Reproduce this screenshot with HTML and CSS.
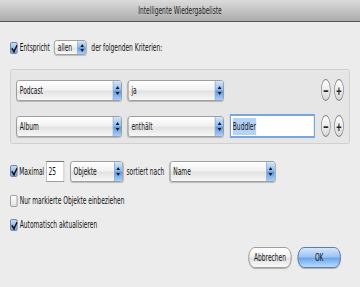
FILE: index.html
```html
<!DOCTYPE html>
<html lang="de">
<head>
  <meta charset="UTF-8" />
  <title>Intelligente Wiedergabeliste</title>
  <meta name="viewport" content="width=device-width, initial-scale=1" />
  <link rel="stylesheet" href="styles.css">
</head>
<body>

  <div class="screen">
    <div class="dialog">
      <div class="titlebar">Intelligente Wiedergabeliste</div>

      <div class="content">
        <div class="line match-line">
          <span class="check checked"></span>
          <span class="label">Entspricht</span>
          <div class="popup small allen"><span class="popup-text">allen</span><span class="arrows"><i class="up"></i><i class="down"></i></span></div>
          <span class="label gap-left">der folgenden Kriterien:</span>
        </div>

        <div class="criteria">
          <div class="rule">
            <div class="popup field-a"><span class="popup-text">Podcast</span><span class="arrows"><i class="up"></i><i class="down"></i></span></div>
            <div class="popup field-b"><span class="popup-text">ja</span><span class="arrows"><i class="up"></i><i class="down"></i></span></div>
            <div class="rule-buttons">
              <span class="round-btn">&minus;</span>
              <span class="round-btn">+</span>
            </div>
          </div>
          <div class="rule">
            <div class="popup field-a"><span class="popup-text">Album</span><span class="arrows"><i class="up"></i><i class="down"></i></span></div>
            <div class="popup field-b"><span class="popup-text">enthält</span><span class="arrows"><i class="up"></i><i class="down"></i></span></div>
            <div class="textfield focused"><span class="selected">Buddler</span></div>
            <div class="rule-buttons">
              <span class="round-btn">&minus;</span>
              <span class="round-btn">+</span>
            </div>
          </div>
        </div>

        <div class="line limit-line">
          <span class="check checked"></span>
          <span class="label">Maximal</span>
          <div class="textfield count">25</div>
          <div class="popup unit"><span class="popup-text">Objekte</span><span class="arrows"><i class="up"></i><i class="down"></i></span></div>
          <span class="label">sortiert nach</span>
          <div class="popup sort"><span class="popup-text">Name</span><span class="arrows"><i class="up"></i><i class="down"></i></span></div>
        </div>

        <div class="line option-line first">
          <span class="check"></span>
          <span class="label">Nur markierte Objekte einbeziehen</span>
        </div>

        <div class="line option-line">
          <span class="check checked"></span>
          <span class="label">Automatisch aktualisieren</span>
        </div>

        <div class="buttons">
          <button class="btn">Abbrechen</button>
          <button class="btn default">OK</button>
        </div>
      </div>
    </div>
  </div>

</body>
</html>
```

FILE: styles.css
```css
* {
  box-sizing: border-box;
}
html, body {
  margin: 0;
  padding: 0;
  background: #ececec;
}
body {
  font-family: 'DejaVu Sans', 'Liberation Sans', sans-serif;
  font-stretch: condensed;
  font-size: 11px;
  color: #111;
}

/* the window is drawn at 600px and squeezed to fit, like the screenshot */
.screen {
  width: 360px;
  height: 287px;
  overflow: hidden;
}
.dialog {
  width: 600px;
  height: 287px;
  background: #ececec;
  transform: scaleX(0.6);
  transform-origin: 0 0;
}
.titlebar {
  height: 22px;
  line-height: 21px;
  text-align: center;
  color: #222;
  font-size: 11px;
  background: linear-gradient(to bottom, #dcdcdc, #ababab);
  border-bottom: 1px solid #555;
}
.content {
  padding: 18px 17px 0 17px;
}
.line {
  display: flex;
  align-items: center;
  gap: 4px;
}
.match-line {
  height: 15px;
}
.match-line .allen {
  margin-left: 3px;
}
.gap-left {
  margin-left: 4px;
}

/* checkboxes */
.check {
  width: 12px;
  height: 12px;
  border: 1px solid #8c8c8c;
  border-radius: 2px;
  background: linear-gradient(to bottom, #ffffff, #e2e2e2);
  position: relative;
  flex: none;
}
.check.checked {
  background: linear-gradient(to bottom, #c5dcf5, #6fa3e0);
  border-color: #4f6f9c;
}
.check.checked::after {
  content: "";
  position: absolute;
  left: 3px;
  top: 0px;
  width: 4px;
  height: 7px;
  border: solid #111;
  border-width: 0 2px 2px 0;
  transform: rotate(40deg);
}

/* popup menus */
.popup {
  display: flex;
  align-items: stretch;
  height: 21px;
  border: 1px solid #8b8b8b;
  border-radius: 4px;
  background: linear-gradient(to bottom, #ffffff 0%, #f1f1f1 45%, #e3e3e3 55%, #f7f7f7 100%);
  box-shadow: 0 1px 1px rgba(0,0,0,0.2);
  overflow: hidden;
  flex: none;
}
.popup-text {
  flex: 1;
  padding-left: 5px;
  line-height: 19px;
}
.arrows {
  width: 14px;
  display: flex;
  flex-direction: column;
  align-items: center;
  justify-content: center;
  gap: 3px;
  background: linear-gradient(to bottom, #d4e6fb 0%, #8fbcf0 45%, #5f9ae2 55%, #a9d0fa 100%);
  border-left: 1px solid #6f8fbf;
}
.arrows i {
  width: 0;
  height: 0;
  border-left: 3px solid transparent;
  border-right: 3px solid transparent;
}
.arrows .up {
  border-bottom: 3px solid #111;
}
.arrows .down {
  border-top: 3px solid #111;
}
.popup.small {
  height: 15px;
}
.popup.small .popup-text {
  line-height: 13px;
}
.popup.small .arrows {
  gap: 2px;
}
.allen {
  width: 54px;
}
.field-a {
  width: 176px;
}
.field-b {
  width: 160px;
}
.unit {
  width: 88px;
  margin-left: 7px;
  margin-right: 3px;
}
.sort {
  width: 176px;
  margin-left: 6px;
}

/* criteria box */
.criteria {
  margin-top: 14px;
  width: 566px;
  height: 75px;
  border: 1px solid #c9c9c9;
  border-radius: 3px;
  background: #e6e6e6;
  padding: 9px 9px 0 9px;
  display: flex;
  flex-direction: column;
  gap: 14px;
}
.rule {
  display: flex;
  align-items: center;
  gap: 10px;
  height: 22px;
}
.rule-buttons {
  margin-left: auto;
  display: flex;
  gap: 6px;
}
.round-btn {
  width: 16px;
  height: 22px;
  border: 1px solid #7d7d7d;
  border-radius: 50%;
  background: linear-gradient(to bottom, #ffffff, #d8d8d8);
  display: flex;
  align-items: center;
  justify-content: center;
  font-family: 'Liberation Sans', sans-serif;
  font-size: 15px;
  font-weight: bold;
  line-height: 1;
  color: #222;
}

/* text fields */
.textfield {
  height: 24px;
  width: 142px;
  background: #fff;
  border: 1px solid #8c8c8c;
  padding: 0 3px;
  display: flex;
  align-items: center;
  flex: none;
}
.textfield.focused {
  border: 2px solid #7ba6da;
  box-shadow: 0 0 1px #a9c7ec;
}
.selected {
  background: #b5d3f7;
  padding: 2px 0;
}
.textfield.count {
  width: 30px;
  height: 21px;
  border-color: #a0a0a0;
  border-top-color: #777;
}

.limit-line {
  margin-top: 16px;
  height: 22px;
  gap: 3px;
}
.option-line {
  margin-top: 11px;
  height: 13px;
}
.option-line.first {
  margin-top: 12px;
}

/* buttons */
.buttons {
  display: flex;
  justify-content: flex-end;
  gap: 10px;
  margin-top: 16px;
  padding-right: 15px;
}
.btn {
  width: 72px;
  height: 21px;
  border: 1px solid #8a8a8a;
  border-radius: 11px;
  font-family: inherit;
  font-stretch: condensed;
  font-size: 11px;
  color: #111;
  background: linear-gradient(to bottom, #ffffff 0%, #f2f2f2 45%, #e0e0e0 55%, #fafafa 100%);
  box-shadow: 0 1px 1px rgba(0,0,0,0.25);
  padding: 0;
}
.btn.default {
  border-color: #3d5f9a;
  background: linear-gradient(to bottom, #d5e7fc 0%, #9cc5f3 45%, #6fa8ea 55%, #b7dbff 100%);
}
```
